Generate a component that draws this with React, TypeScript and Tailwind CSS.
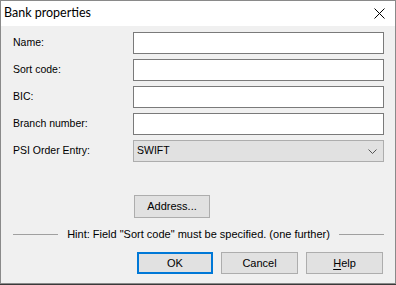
export default function App() {
  return (
    <div className="w-[396px] h-[285px] bg-[#3a3a3a]">
      <div className="w-[396px] h-[284px] border border-[#8a8a8a] bg-[#f0f0f0] flex flex-col font-['Liberation_Sans',Arial,sans-serif] text-[10.5px] text-black">
        <TitleBar />
        <Form />
        <div className="flex pl-[133px] mt-[33px]">
          <Button className="w-[76px] h-[23px]">Address...</Button>
        </div>
        <Hint />
        <div className="flex justify-end gap-[8px] pr-[12px] mt-[11px]">
          <Button primary className="w-[76px] h-[22px]">OK</Button>
          <Button className="w-[77px] h-[22px]">Cancel</Button>
          <Button className="w-[77px] h-[22px]">
            <span className="underline underline-offset-2">H</span>elp
          </Button>
        </div>
      </div>
    </div>
  );
}

const TitleBar = () => {
  return (
    <div className="h-[25px] bg-white flex items-center justify-between pl-[3px] pr-[10px]">
      <span className="font-['Lato',sans-serif] text-[12.5px] leading-none">Bank properties</span>
      <svg width="11" height="11" viewBox="0 0 11 11" className="text-black">
        <path d="M0.5 0.5 L10.5 10.5 M10.5 0.5 L0.5 10.5" stroke="currentColor" strokeWidth="1" />
      </svg>
    </div>
  );
};

const fields = ["Name:", "Sort code:", "BIC:", "Branch number:"];

const Form = () => {
  return (
    <div className="grid grid-cols-[120px_251px] gap-y-[5px] pt-[6px] pl-[12px]">
      {fields.map((f) => (
        <Row key={f} label={f}>
          <div className="h-[22px] border border-[#7a7a7a] bg-white" />
        </Row>
      ))}
      <Row label="PSI Order Entry:">
        <div className="h-[22px] border border-[#adadad] bg-[#e1e1e1] flex items-center justify-between pl-[3px] pr-[6px]">
          <span>SWIFT</span>
          <svg width="9" height="5" viewBox="0 0 9 5">
            <path d="M0.5 0.5 L4.5 4.5 L8.5 0.5" fill="none" stroke="#555" strokeWidth="1" />
          </svg>
        </div>
      </Row>
    </div>
  );
};

const Row = ({ label, children }: { label: string; children: React.ReactNode }) => {
  return (
    <>
      <div className="h-[22px] flex items-center">{label}</div>
      {children}
    </>
  );
};

const Hint = () => {
  return (
    <div className="flex items-center gap-[9px] pl-[12px] pr-[11px] mt-[9px] h-[14px] text-[11px]">
      <div className="flex-1 h-px bg-[#a0a0a0]" />
      <span className="whitespace-nowrap">Hint: Field "Sort code" must be specified. (one further)</span>
      <div className="flex-1 h-px bg-[#a0a0a0]" />
    </div>
  );
};

const Button = ({
  children,
  className,
  primary,
}: {
  children: React.ReactNode;
  className?: string;
  primary?: boolean;
}) => {
  return (
    <button
      className={
        "bg-[#e1e1e1] flex items-center justify-center text-[11px] " +
        (primary ? "border-2 border-[#0078d7] " : "border border-[#adadad] ") +
        (className ?? "")
      }
    >
      {children}
    </button>
  );
};
